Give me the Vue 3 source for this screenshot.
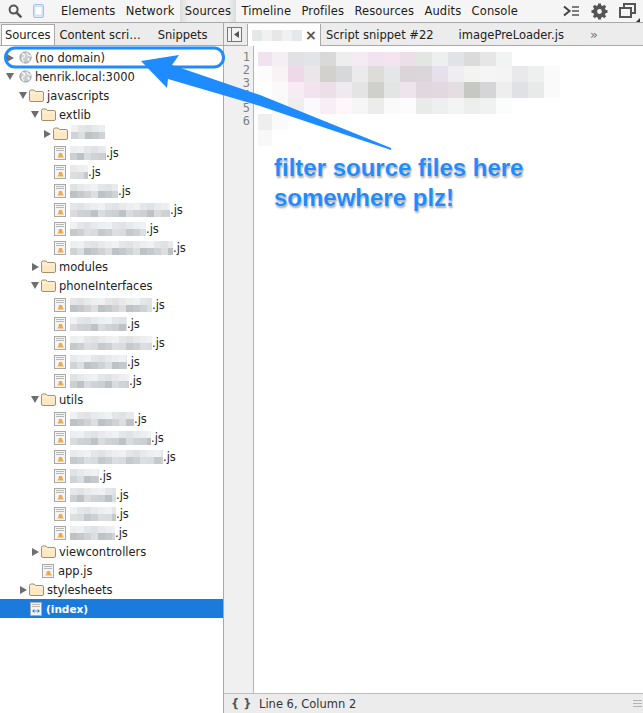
<script setup>
const topTints = ['#e4e6e8', '#eceeef', '#e0e2e4', '#f0f1f2', '#e8e9eb']
const lowTints = ['#d0d3d6', '#c6c9cc', '#d9dbde', '#bfc2c5', '#dcdee0', '#cdd0d3']
function blur(seed, width) {
  const cols = Math.ceil(width / 7)
  const top = []
  const bottom = []
  for (let i = 0; i < cols; i++) {
    top.push(topTints[(seed * 3 + i * 2) % topTints.length])
    bottom.push(lowTints[(seed * 5 + i * 4 + (i >> 1)) % lowTints.length])
  }
  return { top, bottom, width }
}
const js = (width) => ({ type: 'file', indent: 54, width, suffix: '.js' })
const rows = [
  { type: 'domain', indent: 6, arrow: 'closed', label: '(no domain)' },
  { type: 'domain', indent: 6, arrow: 'open', label: 'henrik.local:3000' },
  { type: 'folder', indent: 19, arrow: 'open', label: 'javascripts' },
  { type: 'folder', indent: 31, arrow: 'open', label: 'extlib' },
  { type: 'folder', indent: 43, arrow: 'closed', label: '', width: 34, clipped: true },
  js(36), js(18), js(48), js(100), js(76), js(103),
  { type: 'folder', indent: 31, arrow: 'closed', label: 'modules' },
  { type: 'folder', indent: 31, arrow: 'open', label: 'phoneInterfaces' },
  js(82), js(57), js(82), js(57), js(59),
  { type: 'folder', indent: 31, arrow: 'open', label: 'utils' },
  js(64), js(81), js(93), js(29), js(46), js(46), js(45),
  { type: 'folder', indent: 31, arrow: 'closed', label: 'viewcontrollers' },
  { type: 'file', indent: 42, label: 'app.js' },
  { type: 'folder', indent: 19, arrow: 'closed', label: 'stylesheets' },
  { type: 'html', indent: 30, label: '(index)', selected: true }
].map((r, i) => ({ ...r, id: i, mosaic: r.width ? blur(i + 2, r.width) : null }))

const panels = ['Elements', 'Network', 'Sources', 'Timeline', 'Profiles', 'Resources', 'Audits', 'Console']
const lineNumbers = [1, 2, 3, 4, 5, 6]
const code = [
  ['#f0e2ef','#f4eff3','#e2e2e4','#e2e4e7','#d9d9d9','#eeeeee','#f5ebf3','#f1e3ef','#f5e4f0','#ecdfe8','#e3e6e2','#eeefef','#e1e3e8','#dbdbdb','#e6e6e6','#f2f3f3'],
  ['#fcfcfc','#f8f3f4','#edd9e8','#ebe6ea','#d2d1ce','#d6d8da','#ebebeb','#dddcd8','#e4e6e8','#d9d5d8','#dad6da','#e6e0ec','#efecf2','#f3f3f2','#f5f5f5','#f4f4f4','#e9e9ec','#eef0f0','#fafafa'],
  ['#fdfefe','#fafafa','#f7ecf4','#f3e3ef','#ecdfe9','#eeeaef','#e4e4e4','#cfcfcb','#e3e5e4','#efe3ec','#e2d7df','#e3d8df','#e4dde2','#c6c8c4','#d5d5d8','#eeeeee','#e0e1e5','#e8eaea','#fafafa'],
  ['#ffffff','#f9f9f9','#eeeeee','#fbf9fc','#f8eef5','#fdf6fb','#f6f6f6','#ececec','#fafafa','#fcfcfc','#e9ebe9','#eef0ef','#f3f5f4','#ecefee','#f0f2f2','#fbfdfc'],
  ['#eeeeee','#fafafa'],
  ['#f8f8f8']
]
</script>

<template>
  <div class="app">
    <header class="toolbar">
      <svg class="tool search" width="14" height="14" viewBox="0 0 14 14">
        <circle cx="5.600" cy="5.600" r="4" fill="none" stroke="#555" stroke-width="2" />
        <path d="M8.600 8.600 L12.600 12.600" stroke="#555" stroke-width="2.600" stroke-linecap="round" />
      </svg>
      <svg class="tool phone" width="11" height="14" viewBox="0 0 11 14">
        <rect x="0.500" y="0.500" width="10" height="13" rx="1.500" fill="#dcebfb" stroke="#9cc4f2" />
        <rect x="2" y="2.500" width="7" height="8.500" fill="#fff" stroke="#b5d4f6" stroke-width="0.600" />
      </svg>
      <nav class="panels">
        <span v-for="p in panels" :key="p" class="panel" :class="{ active: p === 'Sources' }">{{ p }}</span>
      </nav>
      <div class="tool-right">
        <svg width="17" height="12" viewBox="0 0 17 12">
          <path d="M1 1.500 L6.500 6 L1 10.500" fill="none" stroke="#444" stroke-width="2" />
          <path d="M9 2h7M9 6h7M9 10h7" stroke="#555" stroke-width="1.600" />
        </svg>
        <svg width="17" height="17" viewBox="0 0 17 17">
          <circle cx="8.500" cy="8.500" r="4.400" fill="none" stroke="#555" stroke-width="4" />
          <path d="M8.500 0.500v3M8.500 13.500v3M0.500 8.500h3M13.500 8.500h3M2.800 2.800l2.200 2.200M12 12l2.200 2.200M14.200 2.800L12 5M5 12l-2.200 2.200" stroke="#555" stroke-width="3" />
        </svg>
        <svg class="dock" width="21" height="19" viewBox="0 0 21 19">
          <rect x="5" y="1" width="11" height="9" fill="none" stroke="#555" stroke-width="2" />
          <rect x="1" y="5" width="11" height="9" fill="#f5f5f5" stroke="#555" stroke-width="2" />
          <path d="M21 15v4h-4z" fill="#333" />
        </svg>
      </div>
    </header>

    <main class="body">
      <aside class="sidebar">
        <div class="subtabs">
          <span class="subtab active">Sources</span>
          <span class="subtab content">Content scri…</span>
          <span class="subtab snippets">Snippets</span>
        </div>
        <ul class="tree">
          <li v-for="r in rows" :key="r.id" class="row" :class="{ selected: r.selected }" :style="{ paddingLeft: r.indent + 'px' }">
            <span v-if="r.arrow" class="arrow" :class="r.arrow"></span>
            <svg v-if="r.type === 'domain'" class="ico globe" width="13" height="13" viewBox="0 0 14 14">
              <circle cx="7" cy="7" r="6" fill="#c9cdd1" stroke="#8c9094" />
              <path d="M3 3c2 0 3 1 3 2.500s-2 1-2.500 2.500S5 11 5 12.500M9 1.500c-1 1.500 0 2.500 1.500 3s2 1 2.500 1M9 8c1.500 0 2 1 1.500 3" fill="none" stroke="#f4f5f6" stroke-width="1.500" />
            </svg>
            <svg v-else-if="r.type === 'folder'" class="ico folder" width="15" height="13" viewBox="0 0 15 13">
              <path d="M0.500 11V2.500Q0.500 1 2 1H5L6.500 2.500H13Q14.500 2.500 14.500 4V11Q14.500 12.500 13 12.500H2Q0.500 12.500 0.500 11Z" fill="#fde8c4" stroke="#a88f6c" />
              <path d="M1.500 4h12" stroke="#fff6e6" />
            </svg>
            <svg v-else class="ico page" width="12" height="14" viewBox="0 0 12 14">
              <rect x="0.500" y="0.500" width="11" height="13" fill="#f4f4f4" stroke="#a8a8a8" />
              <path d="M2 2.500h8M2 4.500h8" stroke="#b8b8b8" />
              <template v-if="r.type === 'html'">
                <path d="M2 9l2.500-2v4zM10 9L7.500 7v4z" fill="#2f7fd8" />
                <rect x="4.500" y="8" width="3" height="2" fill="#9cc7f2" />
              </template>
              <path v-else d="M2.500 11.500c1.500 0 2-1.500 2.500-4.500h3c.5 2 1 4 2 4.500z" fill="#f0a94c" />
            </svg>
            <span v-if="r.mosaic" class="mosaic" :class="{ clipped: r.clipped }" :style="{ width: r.mosaic.width + 'px' }">
              <span class="mosaic-line"><i v-for="(c, j) in r.mosaic.top" :key="j" :style="{ background: c }"></i></span>
              <span class="mosaic-line"><i v-for="(c, j) in r.mosaic.bottom" :key="j" :style="{ background: c }"></i></span>
            </span>
            <span v-if="r.suffix" class="label">{{ r.suffix }}</span>
            <span v-else-if="r.label" class="label">{{ r.label }}</span>
          </li>
        </ul>
      </aside>

      <section class="editor">
        <div class="editor-tabs">
          <span class="toggle">
            <svg width="15" height="15" viewBox="0 0 15 15">
              <rect x="0.500" y="0.500" width="14" height="14" fill="#f2f2f2" stroke="#777" />
              <path d="M4.500 1v13" stroke="#777" />
              <path d="M12 4v7L7 7.500z" fill="#555" />
            </svg>
          </span>
          <span class="etab active">
            <span class="tab-blur"><i></i><i></i><i></i><i></i><i></i></span>
            <span class="close">×</span>
          </span>
          <span class="etab snip">Script snippet #22</span>
          <span class="etab loader">imagePreLoader.js</span>
          <span class="more">»</span>
        </div>
        <div class="editor-main">
          <div class="gutter">
            <span v-for="n in lineNumbers" :key="n">{{ n }}</span>
          </div>
          <div class="code">
            <div class="code-blur">
              <div v-for="(line, i) in code" :key="i" class="code-line">
                <i v-for="(c, j) in line" :key="j" :style="{ background: c }"></i>
              </div>
            </div>
            <p class="note">filter source files here<br />somewhere plz!</p>
          </div>
        </div>
        <footer class="status">
          <span class="braces">{ }</span>
          <span class="pos">Line 6, Column 2</span>
          <span class="grip"><i></i><i></i><i></i></span>
        </footer>
      </section>
    </main>

    <svg class="overlay" width="643" height="713" viewBox="0 0 643 713">
      <rect x="5.500" y="48" width="218" height="19" rx="9.500" fill="none" stroke="#1e8cff" stroke-width="3" />
      <polygon points="141,61 179,55 172,65 260,95 391,148 391,150 260,106 168,79 167,88" fill="#1e8cff" />
    </svg>
  </div>
</template>

<style>
html, body { margin: 0; background: #fff; }
</style>

<style scoped>
.app {
  position: relative;
  width: 643px;
  height: 713px;
  overflow: hidden;
  display: flex;
  flex-direction: column;
  font-family: "DejaVu Sans", sans-serif;
  font-size: 11.500px;
  color: #222;
  background: #fff;
}
.toolbar {
  height: 22px;
  flex: none;
  display: flex;
  align-items: center;
  background: #f5f5f5;
  border-bottom: 1px solid #a9a9a9;
}
.tool { flex: none; }
.search { margin-left: 8px; }
.phone { margin-left: 11px; }
.panels { display: flex; height: 100%; margin-left: 11.800px; }
.panel {
  display: flex;
  align-items: center;
  padding: 0 5.200px;
  color: #1c1c1c;
  white-space: nowrap;
  letter-spacing: 0.100px;
}
.panel.active { background: linear-gradient(to right, #dcdcdc, #f0f0f0 15%, #f0f0f0 85%, #dcdcdc); }
.tool-right {
  margin-left: auto;
  display: flex;
  align-items: center;
  gap: 11px;
  padding-right: 3px;
}
.dock { margin-top: 3px; }
.body { flex: 1; display: flex; min-height: 0; }
.sidebar {
  width: 223px;
  flex: none;
  border-right: 1px solid #a9a9a9;
  display: flex;
  flex-direction: column;
  background: #fff;
}
.subtabs {
  height: 21px;
  padding-top: 1px;
  flex: none;
  display: flex;
  align-items: center;
  background: #ececec;
  border-bottom: 1px solid #a9a9a9;
}
.subtab { white-space: nowrap; padding: 0 4px; }
.subtab.active {
  margin-left: 1px;
  padding: 0 3px;
  height: 21px;
  line-height: 20px;
  background: #fff;
  border: 1px solid #a9a9a9;
  border-bottom: none;
  box-sizing: border-box;
}
.subtab.content { margin-left: 1px; }
.subtab.snippets { margin-left: 9px; }
.tree { list-style: none; margin: 2px 0 0; padding: 0; }
.row {
  height: 19px;
  display: flex;
  align-items: center;
  white-space: nowrap;
  position: relative;
}
.row.selected { background: #1a7bdc; color: #fff; font-weight: 700; font-size: 10.500px; }
.arrow {
  width: 0;
  height: 0;
  flex: none;
  margin-right: 3px;
}
.arrow.closed {
  border-left: 7px solid #6e6e6e;
  border-top: 4px solid transparent;
  border-bottom: 4px solid transparent;
  margin-left: 1px;
  margin-right: 2px;
}
.arrow.open {
  border-top: 7px solid #6e6e6e;
  border-left: 4px solid transparent;
  border-right: 4px solid transparent;
  margin-right: 2px;
}
.ico { flex: none; margin-right: 3px; }
.globe { margin-left: 3px; margin-right: 3px; }
.page { margin-right: 4px; }
.mosaic { display: flex; flex-direction: column; overflow: hidden; filter: blur(0.500px); flex: none; }
.mosaic.clipped { margin-top: -4px; }
.mosaic-line { display: flex; }
.mosaic-line i { display: block; flex: none; width: 7px; height: 7px; }
.editor { flex: 1; min-width: 0; display: flex; flex-direction: column; }
.editor-tabs {
  height: 22px;
  flex: none;
  display: flex;
  align-items: center;
  background: #ececec;
  border-bottom: 1px solid #a9a9a9;
  white-space: nowrap;
}
.toggle { display: flex; margin-left: 3px; }
.toggle svg { display: block; }
.etab { display: flex; align-items: center; padding-top: 1px; }
.etab.active {
  margin-left: 5px;
  width: 74px;
  height: 22px;
  background: #fff;
  border-left: 1px solid #a9a9a9;
  border-right: 1px solid #a9a9a9;
  box-sizing: border-box;
  padding-left: 4px;
  margin-bottom: -1px;
}
.tab-blur { display: flex; filter: blur(0.500px); }
.tab-blur i { width: 10px; height: 11px; background: #e6e7e8; }
.tab-blur i:nth-child(2n) { background: #f1f1f2; }
.close { margin-left: 3px; color: #555; font-size: 14px; font-weight: 700; }
.etab.snip { margin-left: 5px; }
.etab.loader { margin-left: 25px; }
.more { margin-left: 26px; color: #777; font-size: 13px; }
.editor-main { flex: 1; display: flex; min-height: 0; }
.gutter {
  width: 30px;
  flex: none;
  box-sizing: border-box;
  background: #f0f0f0;
  border-right: 1px solid #b4b4b4;
  display: flex;
  flex-direction: column;
  align-items: flex-end;
  padding: 5px 3px 0 0;
  font-family: "DejaVu Sans Mono", monospace;
  font-size: 12px;
  line-height: 12.800px;
  color: #808080;
}
.code { flex: 1; min-width: 0; padding: 6px 0 0 4px; }
.code-blur { height: 97px; filter: blur(0.300px); }
.code-line { display: flex; height: 16px; }
.code-line:first-child { height: 14px; }
.code-line i { display: block; width: 16px; height: 100%; }
.code-line i:first-child { width: 14px; }
.note {
  margin: 4px 0 0 16px;
  font-family: "Liberation Sans", sans-serif;
  font-size: 24px;
  font-weight: 700;
  line-height: 30px;
  color: #1e8cff;
  text-shadow: 0 0 1px #fff, 1px 2px 2px rgba(0, 0, 0, 0.35);
  white-space: nowrap;
}
.status {
  height: 20px;
  flex: none;
  box-sizing: border-box;
  background: #ececec;
  border-top: 1px solid #bdbdbd;
  display: flex;
  align-items: center;
}
.braces { margin-left: 7px; font-weight: 700; color: #555; width: 28px; }
.pos { color: #333; }
.grip { margin-left: auto; margin-right: 1px; display: flex; flex-direction: column; gap: 2px; }
.grip i { display: block; width: 9px; height: 1px; background: #b4b4b4; }
.overlay { position: absolute; left: 0; top: 0; pointer-events: none; }
</style>
